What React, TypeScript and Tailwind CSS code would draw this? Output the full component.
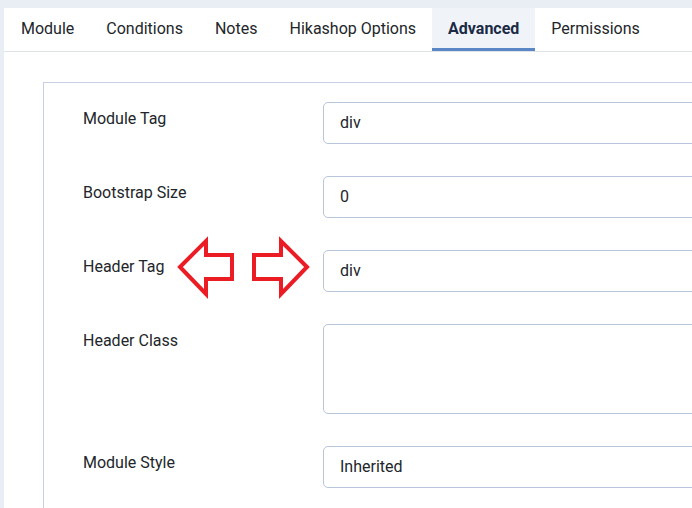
const tabs = ['Module', 'Conditions', 'Notes', 'Hikashop Options', 'Advanced', 'Permissions'];

function Row({ label, value, tall }: { label: string; value: string; tall?: boolean }) {
  return (
    <div className="flex mb-[32px]">
      <div className="w-[240px] pt-[5px] text-[16px] leading-6 text-[#22262a]">{label}</div>
      <div
        className={`w-[420px] border border-[#b8c6db] rounded-[5px] px-4 text-[16px] text-[#22262a] flex ${
          tall ? 'h-[90px]' : 'h-[42px] items-center'
        }`}
      >
        {value}
      </div>
    </div>
  );
}

export default function App() {
  return (
    <div
      className="relative w-[692px] h-[508px] overflow-hidden bg-[#e9eef5] pt-2 pl-1"
      style={{ fontFamily: 'Roboto, "Liberation Sans", sans-serif' }}
    >
      <div className="bg-white w-[760px] h-[520px]">
        {/* Tabs */}
        <div className="flex border-b border-[#dfe3e8] pl-px">
          {tabs.map((t) =>
            t === 'Advanced' ? (
              <div
                key={t}
                className="h-[43px] px-4 pt-px flex items-center bg-[#f0f4f9] border-b-[3px] border-[#5a86c5] text-[16px] font-bold text-[#1b2a45]"
              >
                {t}
              </div>
            ) : (
              <div key={t} className="h-[43px] px-4 pb-[2px] flex items-center text-[16px] text-[#22262a]">
                {t}
              </div>
            )
          )}
        </div>

        {/* Fieldset */}
        <div className="pl-[39px] pt-[30px]">
          <div className="border border-[#c5d1e2] pl-[39px] pt-[19px] h-[500px]">
            <Row label="Module Tag" value="div" />
            <Row label="Bootstrap Size" value="0" />
            <Row label="Header Tag" value="div" />
            <Row label="Header Class" value="" tall />
            <Row label="Module Style" value="Inherited" />
          </div>
        </div>
      </div>

      {/* Annotation arrows */}
      <svg className="absolute left-0 top-0" width="692" height="508" viewBox="0 0 692 508">
        <polygon
          points="180,267 206,241 206,255 232,255 232,279 206,279 206,294"
          fill="none"
          stroke="#ec1c24"
          strokeWidth="4"
          strokeLinejoin="miter"
        />
        <polygon
          points="307,267 281,241 281,255 254,255 254,279 281,279 281,294"
          fill="none"
          stroke="#ec1c24"
          strokeWidth="4"
          strokeLinejoin="miter"
        />
      </svg>
    </div>
  );
}
